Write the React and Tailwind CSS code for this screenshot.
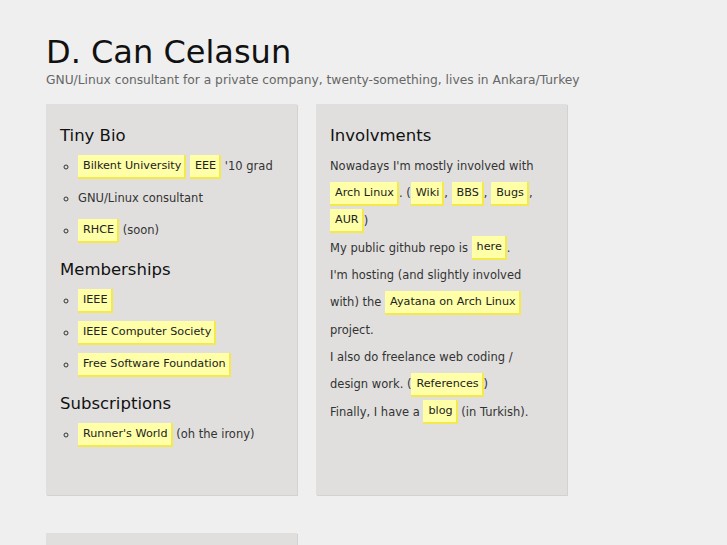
const L = ({ children }) => (
  <a className="inline-block pl-[5px] pr-[3px] py-[4px] text-[11.2px] leading-[14px] bg-[#ffffa8] border-r-2 border-b-2 border-[#f4e94c] text-[#222] align-middle">
    {children}
  </a>
);

const Panel = ({ children }) => (
  <div className="w-[251px] h-[391px] bg-[#e0dfde] shadow-[1px_1px_0_#d3d2d1] px-[14px] pt-[22px]">
    {children}
  </div>
);

const H = ({ children, className = "" }) => (
  <h2 className={"text-[16.5px] leading-[20px] text-[#111] " + className}>{children}</h2>
);

const Item = ({ children }) => <li className="leading-[27px] mb-[5px]">{children}</li>;

export default function App() {
  return (
    <div className="min-h-[545px] bg-[#efefef] px-[46px] pt-[34px] pb-10 text-[11.5px] text-[#333] font-['DejaVu_Sans',sans-serif]">
      <h1 className="text-[32px] leading-[36px] text-[#111]">D. Can Celasun</h1>
      <p className="mt-[3px] text-[#666] text-[12.25px] leading-[15px] whitespace-nowrap">
        GNU/Linux consultant for a private company, twenty-something, lives in Ankara/Turkey
      </p>

      <div className="mt-[16px] flex gap-[19px]">
        <Panel>
          <H>Tiny Bio</H>
          <ul className="list-[circle] pl-[18px] mt-[7px]">
            <Item><L>Bilkent University</L> <L>EEE</L> '10 grad</Item>
            <Item>GNU/Linux consultant</Item>
            <Item><L>RHCE</L> (soon)</Item>
          </ul>
          <H className="mt-[16px]">Memberships</H>
          <ul className="list-[circle] pl-[18px] mt-[7px]">
            <Item><L>IEEE</L></Item>
            <Item><L>IEEE Computer Society</L></Item>
            <Item><L>Free Software Foundation</L></Item>
          </ul>
          <H className="mt-[16px]">Subscriptions</H>
          <ul className="list-[circle] pl-[18px] mt-[7px]">
            <Item><L>Runner's World</L> (oh the irony)</Item>
          </ul>
        </Panel>

        <Panel>
          <H>Involvments</H>
          <div className="mt-[7px] leading-[27.3px] whitespace-nowrap">
            <div>Nowadays I'm mostly involved with</div>
            <div><L>Arch Linux</L>. (<L>Wiki</L>, <L>BBS</L>, <L>Bugs</L>,</div>
            <div><L>AUR</L>)</div>
            <div>My public github repo is <L>here</L>.</div>
            <div>I'm hosting (and slightly involved</div>
            <div>with) the <L>Ayatana on Arch Linux</L></div>
            <div>project.</div>
            <div>I also do freelance web coding /</div>
            <div>design work. (<L>References</L>)</div>
            <div>Finally, I have a <L>blog</L> (in Turkish).</div>
          </div>
        </Panel>
      </div>

      <div className="mt-[38px] w-[251px] h-[200px] bg-[#e0dfde] shadow-[1px_1px_0_#d3d2d1]" />
    </div>
  );
}
